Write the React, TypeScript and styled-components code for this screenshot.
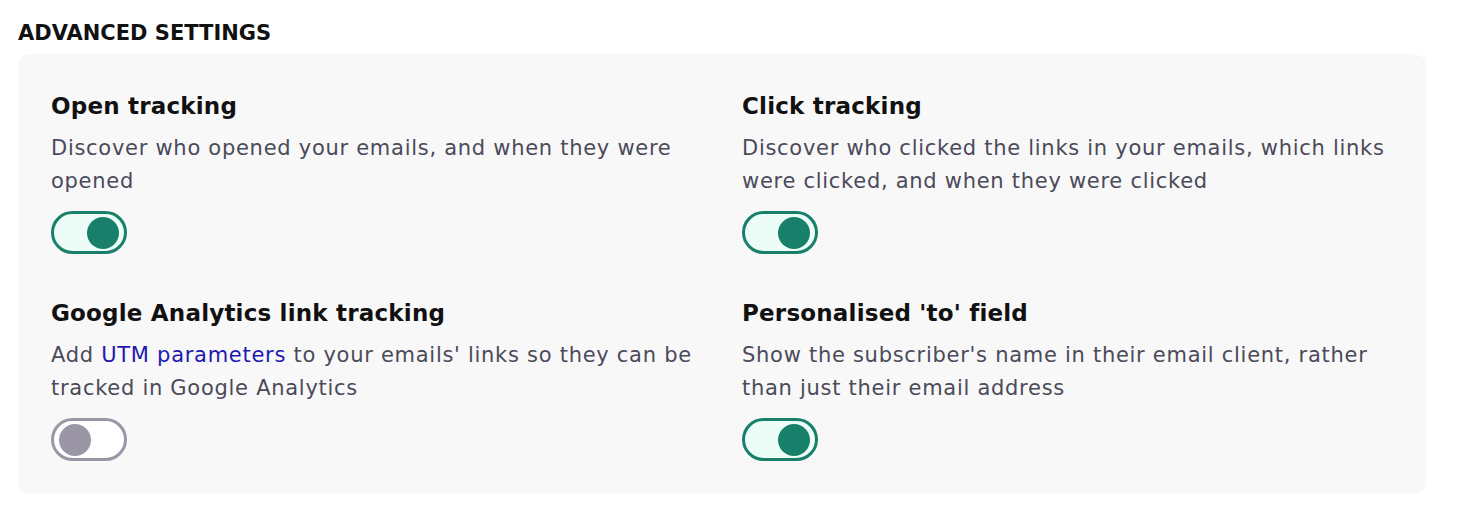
import { useState } from 'react';
import styled, { createGlobalStyle } from 'styled-components';

const GlobalStyle = createGlobalStyle`
  body {
    margin: 0;
    background: #ffffff;
    font-family: 'DejaVu Sans', 'Liberation Sans', sans-serif;
  }
`;

const Page = styled.div`
  padding: 21px 34px 30px 18px;
`;

const SectionTitle = styled.h2`
  margin: 0 0 9px;
  font-size: 21px;
  line-height: 24px;
  font-weight: 600;
  color: #111111;
`;

const Card = styled.div`
  display: grid;
  grid-template-columns: 1fr 1fr;
  column-gap: 40px;
  row-gap: 44px;
  padding: 37px 33px 33px;
  background: #f8f8f8;
  border-radius: 12px;
`;

const Setting = styled.div`
  display: flex;
  flex-direction: column;
  align-items: flex-start;
`;

const SettingTitle = styled.h3`
  margin: 0 0 11px;
  font-size: 23px;
  line-height: 30px;
  font-weight: 600;
  letter-spacing: 0.2px;
  color: #111111;
`;

const SettingText = styled.p`
  margin: 0 0 13px;
  font-size: 21px;
  line-height: 33px;
  letter-spacing: 0.72px;
  color: #4b4a5a;
`;

const Link = styled.a`
  color: #1f18b0;
  text-decoration: none;
`;

const Toggle = styled.button<{ $on: boolean }>`
  display: flex;
  align-items: center;
  justify-content: ${(p) => (p.$on ? 'flex-end' : 'flex-start')};
  box-sizing: border-box;
  width: 76px;
  height: 43px;
  padding: 0 5px;
  border-radius: 22px;
  border: 3px solid ${(p) => (p.$on ? '#18806a' : '#9a96a6')};
  background: ${(p) => (p.$on ? '#ebfdf6' : '#ffffff')};
  cursor: pointer;
`;

const Knob = styled.span<{ $on: boolean }>`
  width: 32px;
  height: 32px;
  border-radius: 50%;
  background: ${(p) => (p.$on ? '#18806a' : '#9a96a6')};
`;

type Item = {
  id: string;
  title: string;
  text: React.ReactNode;
  on: boolean;
};

const items: Item[] = [
  {
    id: 'open',
    title: 'Open tracking',
    text: 'Discover who opened your emails, and when they were opened',
    on: true,
  },
  {
    id: 'click',
    title: 'Click tracking',
    text: 'Discover who clicked the links in your emails, which links were clicked, and when they were clicked',
    on: true,
  },
  {
    id: 'ga',
    title: 'Google Analytics link tracking',
    text: (
      <>
        Add <Link href="#">UTM parameters</Link> to your emails' links so they can be tracked in Google
        Analytics
      </>
    ),
    on: false,
  },
  {
    id: 'to',
    title: "Personalised 'to' field",
    text: "Show the subscriber's name in their email client, rather than just their email address",
    on: true,
  },
];

export default function App() {
  const [state, setState] = useState<Record<string, boolean>>(
    Object.fromEntries(items.map((i) => [i.id, i.on]))
  );

  return (
    <Page>
      <GlobalStyle />
      <SectionTitle>ADVANCED SETTINGS</SectionTitle>
      <Card>
        {items.map((item) => (
          <Setting key={item.id}>
            <SettingTitle>{item.title}</SettingTitle>
            <SettingText>{item.text}</SettingText>
            <Toggle
              $on={state[item.id]}
              aria-pressed={state[item.id]}
              onClick={() => setState((s) => ({ ...s, [item.id]: !s[item.id] }))}
            >
              <Knob $on={state[item.id]} />
            </Toggle>
          </Setting>
        ))}
      </Card>
    </Page>
  );
}
